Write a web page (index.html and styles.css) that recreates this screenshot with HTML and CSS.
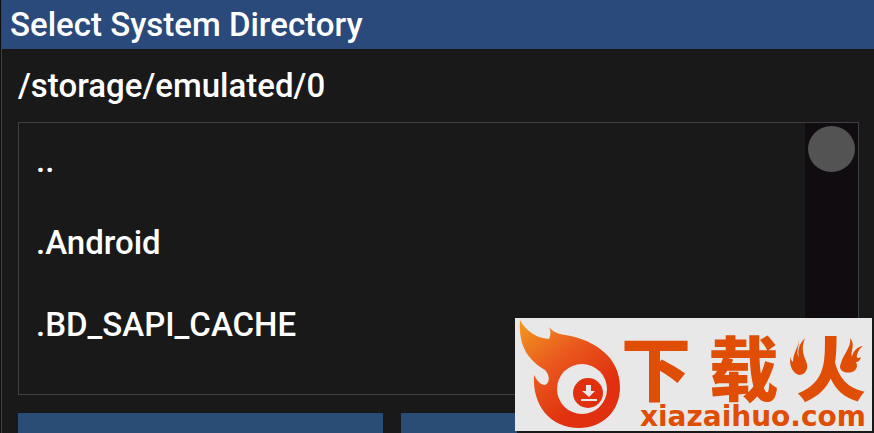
FILE: index.html
```html
<!DOCTYPE html>
<html lang="en">
<head>
    <meta charset="UTF-8">
    <meta name="viewport" content="width=device-width, initial-scale=1">
    <title>Select System Directory</title>
    <link rel="stylesheet" href="styles.css">
</head>
<body>
<div class="dialog">
    <h1 class="title">Select System Directory</h1>

    <div class="content">
        <p class="path">/storage/emulated/0</p>

        <div class="list_box">
            <ul class="list">
                <li><a href="#">..</a></li>
                <li><a href="#">.Android</a></li>
                <li><a href="#">.BD_SAPI_CACHE</a></li>
            </ul>
            <div class="scrollbar">
                <div class="thumb"></div>
            </div>
        </div>

        <div class="buttons">
            <button type="button" class="btn_use" aria-label="Use directory"></button>
            <button type="button" class="btn_cancel" aria-label="Cancel"></button>
        </div>
    </div>
</div>

<div class="brand">
    <!-- flame logo -->
    <svg class="logo" viewBox="0 0 106 113">
        <defs>
            <linearGradient id="fire" x1="0" y1="0" x2="0.6" y2="0.8">
                <stop offset="0" stop-color="#f29a1f"/>
                <stop offset="0.5" stop-color="#ea5a1e"/>
                <stop offset="1" stop-color="#e0300f"/>
            </linearGradient>
        </defs>
        <path fill="url(#fire)" d="M5 2C11 13 21 20 34 21C36 17 36 13 34 9C38 14 43 16 50 17C82 22 105 41 105 69C105 93 88 110 64 110C36 110 17 88 19 57C22 63 26 67 30 67C35 65 35 57 30 52C15 43 3 30 5 2Z"/>
        <circle cx="67" cy="71" r="25" fill="#e8e8e8"/>
        <circle cx="73" cy="75" r="15" fill="#e0300f"/>
        <path fill="#e8e8e8" d="M71 67h5v6h4l-6 6l-7-6h4zM66 81h16v2h-16z"/>
    </svg>

    <div class="brand_text">
        <div class="brand_name">
            <span>下</span>
            <span>载</span>
            <span class="huo">火
                <svg class="flames" viewBox="0 0 76 40">
                    <path class="gap" d="M0 0H30V30L24 39H0ZM48 0H76V38H52L47 30Z"/>
                    <path d="M9 0C10 7 3 14 3 24C1 22 0 20 1 17C-1 23 0 34 9 37C16 37 19 30 16 23C13 16 11 10 15 0C9 6 7 13 9 19C5 14 10 7 9 0Z"/>
                    <path d="M60 0C62 8 53 17 51 25C47 33 56 36 62 34C67 32 68 28 66 24C69 24 70 22 71 19C68 21 66 20 67 17C68 13 70 10 73 8C67 9 63 13 62 19C60 13 66 7 60 0Z"/>
                </svg>
            </span>
        </div>
        <div class="brand_url">xiazaihuo.com</div>
    </div>
</div>
</body>
</html>
```
FILE: styles.css
```css
* {
    margin: 0;
    padding: 0;
    box-sizing: border-box;
}

body {
    position: relative;
    height: 100vh;
    overflow: hidden;
    background-color: #0f0f0f;
    color: #ffffff;
    font-family: Roboto, "Liberation Sans", sans-serif;
    font-size: 33px;
    font-weight: 500;
    line-height: 40px;
}

.dialog {
    height: 100%;
    overflow: hidden;
    margin-left: 1px;
    border-left: 1px solid #404043;
    background-color: #191919;
}

.title {
    padding: 5px 8px 4px;
    background-color: #294a7a;
    font-size: 33px;
    font-weight: 500;
}

.content {
    padding: 17px 15px 0 16px;
}

.path {
    margin-bottom: 16px;
}

.list_box {
    display: flex;
    border: 1px solid #404043;
}

.list {
    flex: 1;
    display: flex;
    flex-direction: column;
    gap: 42px;
    padding: 18px 17px 49px;
    list-style: none;
}

.list a {
    display: block;
    color: #ffffff;
    text-decoration: none;
}

.scrollbar {
    width: 53px;
    padding: 3px;
    background-color: #110c10;
}

.thumb {
    height: 46px;
    border-radius: 50%;
    background-color: #535353;
}

.buttons {
    display: flex;
    gap: 18px;
    margin-top: 18px;
}

.buttons button {
    height: 20px;
    border: none;
    background-color: #294d74;
}

.btn_use {
    width: 365px;
}

.btn_cancel {
    width: 116px;
}

/* logo in the corner, over the dialog */
.brand {
    position: absolute;
    right: 2px;
    bottom: 2px;
    display: flex;
    width: 357px;
    height: 113px;
    background-color: #e8e8e8;
    color: #e04d05;
}

.logo {
    width: 106px;
    height: 113px;
}

.brand_text {
    flex: 1;
    padding: 16px 6px 0 0;
}

.brand_name {
    display: flex;
    justify-content: space-between;
    font-family: "Noto Sans CJK SC", sans-serif;
    font-size: 70px;
    font-weight: 900;
    line-height: 64px;
}

.huo {
    position: relative;
}

.flames {
    position: absolute;
    right: 0;
    top: 4px;
    width: 76px;
    height: 40px;
    fill: #e04d05;
}

.flames .gap {
    fill: #e8e8e8;
}

.brand_url {
    font-family: "DejaVu Sans", sans-serif;
    font-size: 28px;
    font-weight: 700;
    line-height: 38px;
    text-align: right;
}
```
